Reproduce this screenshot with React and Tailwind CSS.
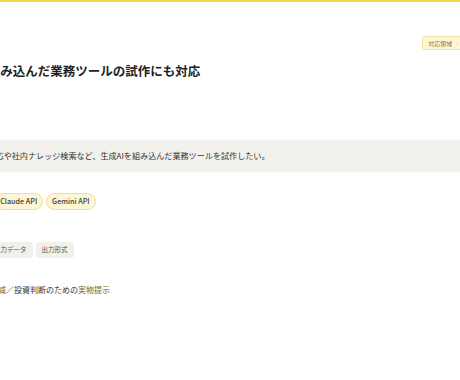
import React from 'react';

const FONT = { fontFamily: '"Noto Sans CJK JP", "Noto Sans", sans-serif' };

function Pill({ children }) {
  return (
    <span className="h-[17px] px-[5px] flex items-center rounded-full bg-[#fdf5d6] border border-[#f1df94] text-[7.2px] font-medium text-[#3f3c33] whitespace-nowrap">
      {children}
    </span>
  );
}

function Chip({ children }) {
  return (
    <span className="h-[16px] px-[6px] flex items-center rounded-[3px] bg-[#f1f0ea] text-[6.5px] text-[#555] whitespace-nowrap">
      {children}
    </span>
  );
}

export default function App() {
  return (
    <div className="w-[460px] h-[380px] overflow-hidden bg-white" style={FONT}>
      <div className="h-[2px] bg-[#efdc4f]" />

      {/* ページ本体は左右にはみ出している */}
      <div className="-ml-[65px] w-[562px]">
        <div className="flex justify-end pt-[34px]">
          <span className="h-[14px] px-[5px] flex items-center gap-[3px] rounded-[3px] bg-[#fdf6d9] border border-[#f3e3a3] text-[6px] text-[#8a7a3a] whitespace-nowrap">
            対応領域 <span>·</span> 生成AI活用
          </span>
        </div>

        <h2 className="mt-[12px] pl-[3px] text-[12.5px] leading-[18px] font-bold text-[#1f1f1f] whitespace-nowrap">
          生成AIを組み込んだ業務ツールの試作にも対応
        </h2>

        <div className="mt-[60px] h-[32px] bg-[#f2f1ec] flex items-center px-[12px] text-[8.1px] text-[#333] whitespace-nowrap">
          問い合わせ対応や社内ナレッジ検索など、生成AIを組み込んだ業務ツールを試作したい。
        </div>

        <div className="mt-[21px] pl-[6px] flex gap-[3px]">
          <Pill>OpenAI API</Pill>
          <Pill>Claude API</Pill>
          <Pill>Gemini API</Pill>
        </div>

        <div className="mt-[32px] pl-[12px] flex gap-[3px]">
          <Chip>業務内容</Chip>
          <Chip>入力データ</Chip>
          <Chip>出力形式</Chip>
        </div>

        <p className="mt-[26px] pl-[15px] text-[8px] leading-[12px] text-[#333] whitespace-nowrap">
          <span className="text-[#7f640a]">作業工数の削減</span>／投資判断のための<span className="text-[#7f640a]">実物提示</span>
        </p>
      </div>
    </div>
  );
}
